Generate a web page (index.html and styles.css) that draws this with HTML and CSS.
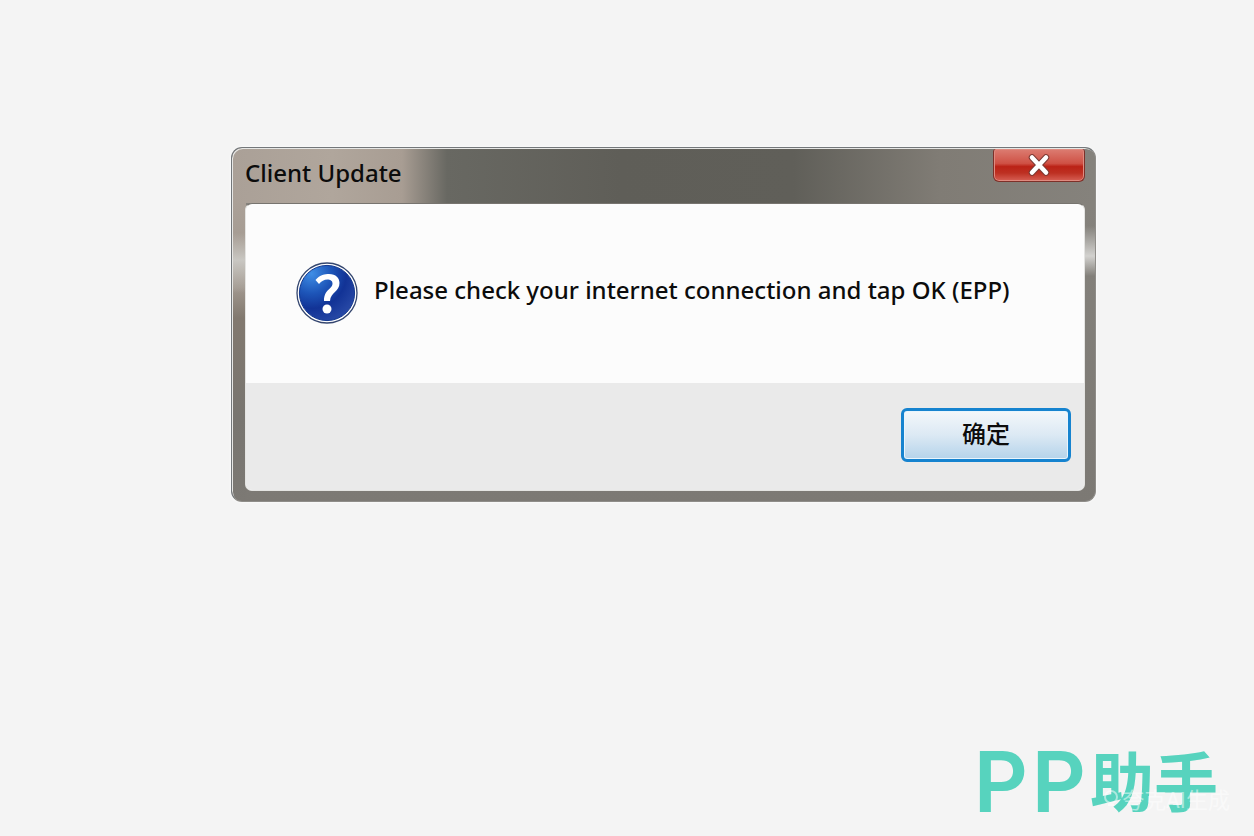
FILE: index.html
```
<!DOCTYPE html>
<html lang="zh-CN">
<head>
    <meta charset="UTF-8">
    <meta name="viewport" content="width=device-width, initial-scale=1.0">
    <title>Client Update</title>
    <link rel="stylesheet" href="styles.css">
</head>
<body>
    <main class="desktop">
        <section class="dialog" role="dialog" aria-labelledby="title" aria-describedby="message">
            <header class="titlebar">
                <h1 class="title" id="title">Client Update</h1>
                <button class="close" type="button" aria-label="Close">
                    <svg width="24" height="24" viewBox="0 0 24 24" fill="none" stroke-linecap="round">
                        <path d="M5 4.500 L19 19.500 M19 4.500 L5 19.500" stroke="#7c3a34" stroke-width="6.500"/>
                        <path d="M5 4.500 L19 19.500 M19 4.500 L5 19.500" stroke="#fff" stroke-width="4.500"/>
                    </svg>
                </button>
            </header>
            <div class="client">
                <div class="content">
                    <svg class="icon" width="62" height="62" viewBox="0 0 62 62" aria-hidden="true">
                        <defs>
                            <radialGradient id="blue" cx="0.22" cy="0.15" r="0.9">
                                <stop offset="0" stop-color="#3f8ee6"/>
                                <stop offset="0.4" stop-color="#1d55b8"/>
                                <stop offset="0.7" stop-color="#123396"/>
                                <stop offset="1" stop-color="#2546a4"/>
                            </radialGradient>
                        </defs>
                        <circle cx="31" cy="31" r="30" fill="#fff" stroke="#34466f" stroke-width="1.3"/>
                        <circle cx="31" cy="31" r="27.6" fill="url(#blue)" stroke="#12388f"/>
                        <path d="M19.500 18 C24 12.500 29 12 33 12 C40 12 43.500 16 43.500 21 C43.500 30 34.500 30 34 39 H28 C28 27 36.500 27.500 36.500 21.500 C36.500 18.500 34 17.500 31.500 17.500 C28 17.500 25.500 19 23 22 Z" fill="#fff"/>
                        <circle cx="31" cy="47" r="4.5" fill="#fff"/>
                    </svg>
                    <p class="message" id="message">Please check your internet connection and tap OK (EPP)</p>
                </div>
                <footer class="actions">
                    <button class="ok" type="button">确定</button>
                </footer>
            </div>
        </section>
        <div class="brand">
            <span class="latin">P</span>
            <span class="latin">P</span>
            <span class="hanzi">助手</span>
            <div class="watermark">
                <svg width="18" height="18" viewBox="0 0 18 18" fill="none" stroke="currentColor" stroke-width="2" aria-hidden="true">
                    <circle cx="9" cy="8" r="6"/>
                    <path d="M6 16 H12"/>
                </svg>
                <span>夸克AI生成</span>
            </div>
        </div>
    </main>
</body>
</html>
```
FILE: styles.css
```
* {
    box-sizing: border-box;
}

body {
    margin: 0;
    background: #f4f4f4;
    font-family: "Noto Sans", "Noto Sans CJK SC", sans-serif;
    color: #0c0c0c;
}

.desktop {
    display: flex;
    flex-direction: column;
    min-height: 100vh;
    padding: 147px 36px 18px 231px;
}

.dialog {
    margin-right: 122px;
    padding: 0 10px 10px 13px;
    border: 1px solid #73777a;
    border-right-color: #8f8d89;
    border-bottom-color: #8f8d89;
    border-radius: 11px;
    box-shadow: inset 1px 1px 0 #e6e6e4, 0 0 3px #fff;
    background:
        linear-gradient(180deg, transparent 85px, #c9c7c2 112px, transparent 145px) left top / 14px 100% no-repeat,
        linear-gradient(180deg, transparent 78px, #d2d1ce 108px, transparent 128px) right top / 12px 100% no-repeat,
        linear-gradient(90deg, #aaa097 0, #b0a69c 100px, #a89d93 170px, #686862 215px, #5f5e58 45%, #605f59 65%, #807c75 82%, #85827c 100%) left top / 100% 55px no-repeat,
        linear-gradient(180deg, #aaa097 56px, #a0978e 140px, #82796f 170px, #787570 270px, #7c7974 100%) left top / 14px 100% no-repeat,
        linear-gradient(180deg, #85827c 56px, #7c7974 100%);
}

.titlebar {
    display: flex;
    justify-content: space-between;
    align-items: flex-start;
    height: 55px;
}

.title {
    margin: 0;
    padding-top: 9px;
    font-size: 24px;
    line-height: 32px;
    font-weight: 500;
}

.close {
    display: flex;
    align-items: center;
    justify-content: center;
    width: 92px;
    height: 33px;
    margin-top: 1px;
    padding: 0;
    border: 1px solid #7d3029;
    border-top: 0;
    border-radius: 3px 3px 6px 6px;
    box-shadow: inset 0 0 0 1px #df8b80;
    background: linear-gradient(180deg, #dc7d72 0, #cf5145 45%, #bb2216 55%, #bd3022 75%, #d76055 100%);
}

.client {
    overflow: hidden;
    border: 1px solid #e4e4e2;
    border-top-color: #77746f;
    border-radius: 7px;
    background: #fcfcfc;
}

.content {
    display: flex;
    align-items: flex-start;
    gap: 16px;
    height: 179px;
    padding: 58px 50px 0;
}

.icon {
    flex: none;
}

.message {
    margin: 0;
    font-size: 24px;
    line-height: 56px;
    font-weight: 500;
    white-space: nowrap;
}

.actions {
    display: flex;
    justify-content: flex-end;
    padding: 25px 13px 28px;
    background: #eaeaea;
}

.ok {
    width: 170px;
    height: 54px;
    padding: 0 0 4px;
    border: 3px solid #1683cf;
    border-radius: 6px;
    background: linear-gradient(180deg, #f3f7fa 0, #dce9f4 50%, #b4d3ea 100%);
    box-shadow: inset 0 0 0 1px #e8f5fd;
    font-family: "Noto Sans CJK SC", sans-serif;
    font-size: 24px;
    font-weight: 500;
    line-height: 32px;
    color: #0c0c0c;
}

.brand {
    position: relative;
    display: flex;
    justify-content: flex-end;
    align-items: flex-start;
    gap: 4px;
    margin-top: auto;
    line-height: 72px;
    color: #57d3be;
}

.latin {
    font-family: Inter, sans-serif;
    font-size: 84px;
    font-weight: 600;
}

.hanzi {
    font-family: "Noto Sans CJK SC", sans-serif;
    font-size: 64px;
    font-weight: 700;
    line-height: 64px;
}

/* generator mark laid over the logo */
.watermark {
    position: absolute;
    right: -12px;
    bottom: 8px;
    display: flex;
    align-items: center;
    gap: 2px;
    font-family: "Noto Sans CJK SC", sans-serif;
    font-size: 22px;
    line-height: 24px;
    color: rgba(255, 255, 255, 0.5);
}
```
